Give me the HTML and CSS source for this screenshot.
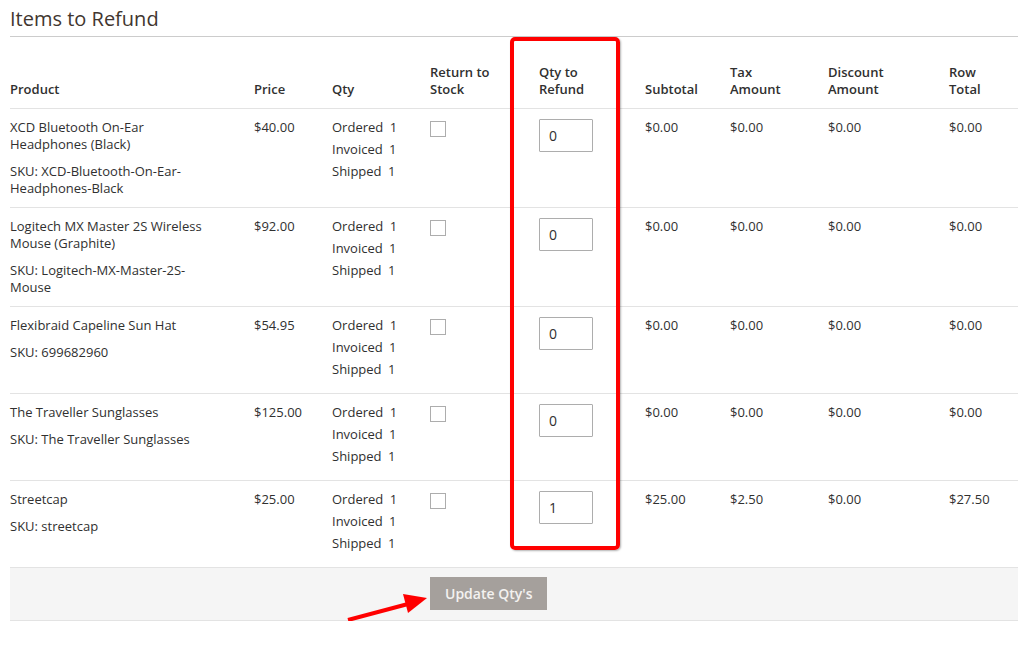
FILE: index.html
```html
<!DOCTYPE html>
<html lang="en">
<head>
    <meta charset="UTF-8">
    <meta name="viewport" content="width=device-width, initial-scale=1.0">
    <link rel="stylesheet" href="styles.css">
</head>
<body>
    <div class="page">
        <h2 class="section-title">Items to Refund</h2>

        <table class="items-table">
            <thead>
                <tr>
                    <th class="col-product">Product</th>
                    <th class="col-price">Price</th>
                    <th class="col-qty">Qty</th>
                    <th class="col-return">Return to<br>Stock</th>
                    <th class="col-refund">Qty to<br>Refund</th>
                    <th class="col-subtotal">Subtotal</th>
                    <th class="col-tax">Tax<br>Amount</th>
                    <th class="col-discount">Discount<br>Amount</th>
                    <th class="col-total">Row<br>Total</th>
                </tr>
            </thead>
            <tbody>
                <tr>
                    <td class="col-product">
                        <div class="product-name">XCD Bluetooth On-Ear Headphones (Black)</div>
                        <div class="product-sku">SKU: XCD-Bluetooth-On-Ear-Headphones-Black</div>
                    </td>
                    <td>$40.00</td>
                    <td>
                        <div class="qty-line">Ordered <span>1</span></div>
                        <div class="qty-line">Invoiced <span>1</span></div>
                        <div class="qty-line">Shipped <span>1</span></div>
                    </td>
                    <td><input type="checkbox" class="checkbox"></td>
                    <td><input type="text" class="qty-input" value="0"></td>
                    <td>$0.00</td>
                    <td>$0.00</td>
                    <td>$0.00</td>
                    <td>$0.00</td>
                </tr>
                <tr>
                    <td class="col-product">
                        <div class="product-name">Logitech MX Master 2S Wireless Mouse (Graphite)</div>
                        <div class="product-sku">SKU: Logitech-MX-Master-2S-Mouse</div>
                    </td>
                    <td>$92.00</td>
                    <td>
                        <div class="qty-line">Ordered <span>1</span></div>
                        <div class="qty-line">Invoiced <span>1</span></div>
                        <div class="qty-line">Shipped <span>1</span></div>
                    </td>
                    <td><input type="checkbox" class="checkbox"></td>
                    <td><input type="text" class="qty-input" value="0"></td>
                    <td>$0.00</td>
                    <td>$0.00</td>
                    <td>$0.00</td>
                    <td>$0.00</td>
                </tr>
                <tr>
                    <td class="col-product">
                        <div class="product-name">Flexibraid Capeline Sun Hat</div>
                        <div class="product-sku">SKU: 699682960</div>
                    </td>
                    <td>$54.95</td>
                    <td>
                        <div class="qty-line">Ordered <span>1</span></div>
                        <div class="qty-line">Invoiced <span>1</span></div>
                        <div class="qty-line">Shipped <span>1</span></div>
                    </td>
                    <td><input type="checkbox" class="checkbox"></td>
                    <td><input type="text" class="qty-input" value="0"></td>
                    <td>$0.00</td>
                    <td>$0.00</td>
                    <td>$0.00</td>
                    <td>$0.00</td>
                </tr>
                <tr>
                    <td class="col-product">
                        <div class="product-name">The Traveller Sunglasses</div>
                        <div class="product-sku">SKU: The Traveller Sunglasses</div>
                    </td>
                    <td>$125.00</td>
                    <td>
                        <div class="qty-line">Ordered <span>1</span></div>
                        <div class="qty-line">Invoiced <span>1</span></div>
                        <div class="qty-line">Shipped <span>1</span></div>
                    </td>
                    <td><input type="checkbox" class="checkbox"></td>
                    <td><input type="text" class="qty-input" value="0"></td>
                    <td>$0.00</td>
                    <td>$0.00</td>
                    <td>$0.00</td>
                    <td>$0.00</td>
                </tr>
                <tr>
                    <td class="col-product">
                        <div class="product-name">Streetcap</div>
                        <div class="product-sku">SKU: streetcap</div>
                    </td>
                    <td>$25.00</td>
                    <td>
                        <div class="qty-line">Ordered <span>1</span></div>
                        <div class="qty-line">Invoiced <span>1</span></div>
                        <div class="qty-line">Shipped <span>1</span></div>
                    </td>
                    <td><input type="checkbox" class="checkbox"></td>
                    <td><input type="text" class="qty-input" value="1"></td>
                    <td>$25.00</td>
                    <td>$2.50</td>
                    <td>$0.00</td>
                    <td>$27.50</td>
                </tr>
            </tbody>
            <tfoot>
                <tr>
                    <td colspan="3"></td>
                    <td colspan="6"><button class="update-btn">Update Qty's</button></td>
                </tr>
            </tfoot>
        </table>

        <!-- annotation overlays -->
        <div class="highlight-box"></div>
        <svg class="arrow" width="110" height="45" viewBox="0 0 110 45">
            <line x1="8" y1="35" x2="68" y2="19" stroke="#f00" stroke-width="4"/>
            <polygon points="87,13 63,9 68,28" fill="#f00"/>
        </svg>
    </div>
</body>
</html>
```

FILE: styles.css
```css
body {
    margin: 0;
    font-family: "Open Sans", "Liberation Sans", sans-serif;
    font-size: 13px;
    color: #303030;
    background-color: #fff;
}
.page {
    position: relative;
    width: 1008px;
    margin-left: 10px;
}
.section-title {
    margin: 0;
    padding: 5px 0 3px;
    font-size: 20px;
    font-weight: 400;
    line-height: 28px;
    color: #41362f;
    border-bottom: 1px solid #cccccc;
}
.items-table {
    width: 1008px;
    margin-top: 17px;
    border-collapse: collapse;
    table-layout: fixed;
}
.items-table th {
    padding: 10px 0;
    font-weight: 600;
    line-height: 17px;
    text-align: left;
    vertical-align: bottom;
    white-space: nowrap;
    border-bottom: 1px solid #e3e3e3;
}
.items-table tbody td {
    padding: 10px 0;
    line-height: 17px;
    vertical-align: top;
    border-bottom: 1px solid #e3e3e3;
}
.col-product { width: 244px; }
.col-price { width: 78px; }
.col-qty { width: 98px; }
.col-return { width: 109px; }
.col-refund { width: 106px; }
.col-subtotal { width: 85px; }
.col-tax { width: 98px; }
.col-discount { width: 121px; }
.col-total { width: 69px; }
.items-table td.col-product {
    padding-right: 44px;
}
.product-sku {
    margin-top: 10px;
}
.qty-line {
    margin-bottom: 5px;
}
.qty-line span {
    margin-left: 3px;
}
.checkbox {
    appearance: none;
    display: block;
    width: 16px;
    height: 16px;
    margin: 2px 0 0;
    border: 1px solid #adadad;
    background: #fff;
}
.qty-input {
    display: block;
    box-sizing: border-box;
    width: 54px;
    height: 33px;
    margin: 0;
    padding: 0 9px;
    font-family: inherit;
    font-size: 14px;
    color: #303030;
    border: 1px solid #adadad;
    border-radius: 1px;
}
.items-table tfoot td {
    padding: 9px 0 10px;
    background-color: #f5f5f5;
    border-bottom: 1px solid #e3e3e3;
}
.update-btn {
    display: block;
    height: 33px;
    padding: 0 15px;
    font-family: inherit;
    font-size: 14px;
    font-weight: 600;
    color: #f4f2f0;
    background-color: #a5a09c;
    border: none;
}
.highlight-box {
    position: absolute;
    left: 500px;
    top: 37px;
    width: 110px;
    height: 513px;
    box-sizing: border-box;
    border: 4px solid #ff0000;
    border-radius: 5px;
    box-shadow: 1px 1px 2px rgba(0,0,0,0.3);
}
.arrow {
    position: absolute;
    left: 330px;
    top: 585px;
}
```
